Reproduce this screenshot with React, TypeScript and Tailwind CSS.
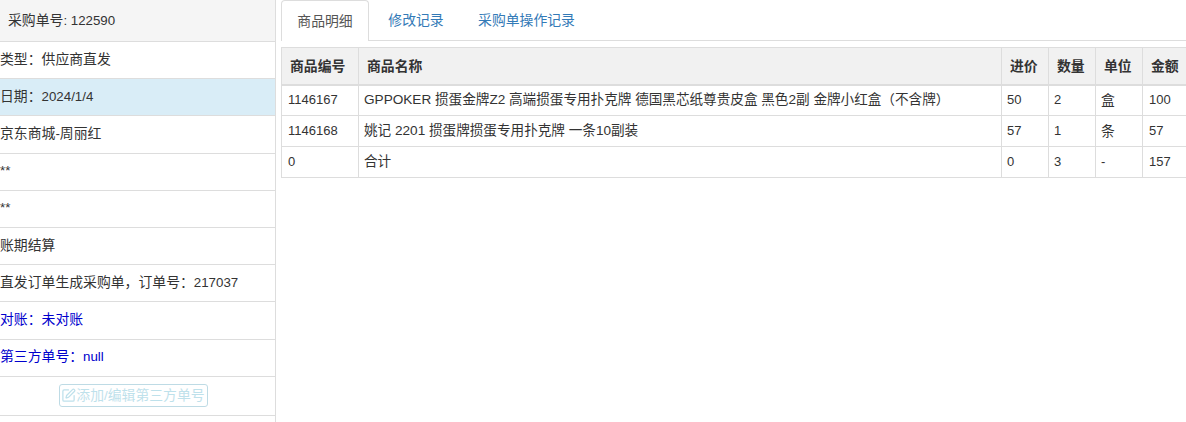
import React from 'react';
import { SquarePen } from 'lucide-react';

const font = 'font-["Liberation_Sans","Noto_Sans_CJK_SC",sans-serif]';

const sideRows = [
  { text: '类型\uff1a供应商直发' },
  { text: '日期\uff1a2024/1/4', active: true },
  { text: '京东商城-周丽红' },
  { text: '**' },
  { text: '**' },
  { text: '账期结算' },
  { text: '直发订单生成采购单\uff0c订单号\uff1a217037' },
  { text: '对账\uff1a未对账', blue: true },
  { text: '第三方单号\uff1anull', blue: true },
];

const goods = [
  ['1146167', 'GPPOKER 掼蛋金牌Z2 高端掼蛋专用扑克牌 德国黑芯纸尊贵皮盒 黑色2副 金牌小红盒\uff08不含牌\uff09', '50', '2', '盒', '100'],
  ['1146168', '姚记 2201 掼蛋牌掼蛋专用扑克牌 一条10副装', '57', '1', '条', '57'],
  ['0', '合计', '0', '3', '-', '157'],
];

const headers = ['商品编号', '商品名称', '进价', '数量', '单位', '金额'];

// chinese runs sit a bit larger than the latin around them
function Mixed({ text }: { text: string }) {
  const parts = text.split(/([\u3000-\u9fff\uff00-\uffef]+)/);
  return (
    <>
      {parts.map((part, i) =>
        i % 2 === 1 ? (
          <span key={i} className="text-[13.85px]">
            {part}
          </span>
        ) : (
          part
        ),
      )}
    </>
  );
}

export default function App() {
  return (
    <div className={`${font} flex h-[422px] w-[1186px] overflow-hidden bg-white text-[13px] leading-[18px] text-[#333]`}>
      <aside className="w-[276px] shrink-0 border-r border-[#ddd] text-[13.3px]">
        <div className="flex h-[42px] items-center border-b border-[#ddd] bg-[#f5f5f5] pl-2">
          <span><Mixed text="采购单号" />: 122590</span>
        </div>
        {sideRows.map((row, i) => (
          <div
            key={i}
            className={`flex h-[37.2px] items-center border-b border-[#ddd] pb-[2px] ${row.active ? 'bg-[#d9edf7]' : ''} ${row.blue ? 'text-[#0000cd]' : ''}`}
          >
            <span><Mixed text={row.text} /></span>
          </div>
        ))}
        <div className="flex h-[39px] items-center justify-center border-b border-[#ddd]">
          <button className="mr-[9px] flex h-[23px] w-[149px] items-center justify-center rounded-[3px] border border-[#7fb9cc] text-[#7fc4d9] opacity-50">
            <SquarePen size={15} strokeWidth={2} />
            <span><Mixed text="添加/编辑第三方单号" /></span>
          </button>
        </div>
      </aside>

      <main className="min-w-0 flex-1 pl-[5px]">
        <div className="flex h-[41px] border-b border-[#ddd] text-[13.85px]">
          <div className="mb-[-1px] flex h-[41px] w-[88px] items-center justify-center rounded-t-[4px] border border-b-0 border-[#ddd] bg-white text-[#555]">
            商品明细
          </div>
          <div className="flex w-[94px] items-center justify-center text-[#337ab7]">修改记录</div>
          <div className="flex w-[127px] items-center justify-center text-[#337ab7]">采购单操作记录</div>
        </div>

        <table className="mt-[6px] w-[906px] table-fixed border-collapse">
          <colgroup>
            <col className="w-[77px]" />
            <col className="w-[643px]" />
            <col className="w-[47px]" />
            <col className="w-[47px]" />
            <col className="w-[47px]" />
            <col className="w-[45px]" />
          </colgroup>
          <thead>
            <tr className="h-[37px] bg-[#f1f1f1] text-[13.85px]">
              {headers.map((h, i) => (
                <th
                  key={h}
                  className={`border-t border-b-2 border-l border-[#ddd] pl-2 text-left font-bold ${i === 5 ? 'border-r-0' : 'border-r'}`}
                >
                  {h}
                </th>
              ))}
            </tr>
          </thead>
          <tbody>
            {goods.map((row) => (
              <tr key={row[0]} className="h-[31px]">
                {row.map((cell, i) => (
                  <td
                    key={i}
                    className={`whitespace-nowrap border-y border-l border-[#ddd] ${i === 0 || i === 5 ? 'pl-[6px]' : 'pl-[5px]'} ${i === 5 ? 'border-r-0' : 'border-r'} ${i === 1 ? 'text-[13.6px]' : ''}`}
                  >
                    {i === 1 ? cell : <Mixed text={cell} />}
                  </td>
                ))}
              </tr>
            ))}
          </tbody>
        </table>
      </main>
    </div>
  );
}
